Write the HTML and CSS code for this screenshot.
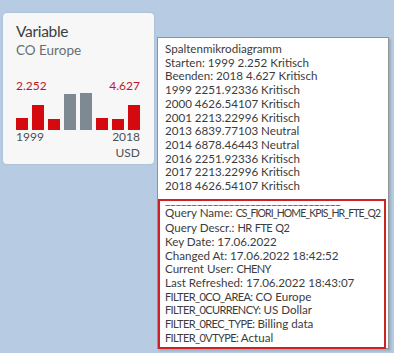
FILE: index.html
```html
<!DOCTYPE html>
<html lang="de">
<head>
    <meta charset="UTF-8">
    <meta name="viewport" content="width=device-width, initial-scale=1.0">
    <title>Variable - CO Europe</title>
    <link rel="stylesheet" href="styles.css">
</head>
<body>

<div class="tile">
    <div class="tileTitle">Variable</div>
    <div class="tileSubtitle">CO Europe</div>

    <div class="chartTop">
        <span>2.252</span>
        <span>4.627</span>
    </div>
    <div class="bars">
        <div class="bar critical" style="height:12px"></div>
        <div class="bar critical" style="height:25px"></div>
        <div class="bar critical" style="height:11px"></div>
        <div class="bar neutral" style="height:36px"></div>
        <div class="bar neutral" style="height:37px"></div>
        <div class="bar critical" style="height:12px"></div>
        <div class="bar critical" style="height:11px"></div>
        <div class="bar critical" style="height:25px"></div>
    </div>
    <div class="chartBottom">
        <span>1999</span>
        <span>2018</span>
    </div>
    <div class="unit">USD</div>
</div>

<div class="tooltip">
    <div class="line">Spaltenmikrodiagramm</div>
    <div class="line">Starten: 1999 2.252 Kritisch</div>
    <div class="line">Beenden: 2018 4.627 Kritisch</div>
    <div class="line">1999 2251.92336 Kritisch</div>
    <div class="line">2000 4626.54107 Kritisch</div>
    <div class="line">2001 2213.22996 Kritisch</div>
    <div class="line">2013 6839.77103 Neutral</div>
    <div class="line">2014 6878.46443 Neutral</div>
    <div class="line">2016 2251.92336 Kritisch</div>
    <div class="line">2017 2213.22996 Kritisch</div>
    <div class="line">2018 4626.54107 Kritisch</div>

    <div class="queryInfo">
        <div class="line">_________________________________</div>
        <div class="line">Query Name: <span class="id long">CS_FIORI_HOME_KPIS_HR_FTE_Q2</span></div>
        <div class="line">Query Descr.: <span class="id">HR FTE Q2</span></div>
        <div class="line">Key Date: 17.06.2022</div>
        <div class="line">Changed At: 17.06.2022 18:42:52</div>
        <div class="line">Current User: <span class="id">CHENY</span></div>
        <div class="line">Last Refreshed: 17.06.2022 18:43:07</div>
        <div class="line"><span class="id">FILTER_0CO_AREA:</span> CO Europe</div>
        <div class="line"><span class="id">FILTER_0CURRENCY:</span> US Dollar</div>
        <div class="line"><span class="id">FILTER_0REC_TYPE:</span> Billing data</div>
        <div class="line"><span class="id">FILTER_0VTYPE:</span> Actual</div>
    </div>
</div>

</body>
</html>
```

FILE: styles.css
```css
body {
    margin: 0;
    background-color: #b7cbe2;
    width: 394px;
    height: 353px;
    overflow: hidden;
    position: relative;
    font-family: "Lato", "Open Sans", sans-serif;
}

.tile {
    margin-left: 3px;
    margin-top: 13px;
    width: 151px;
    height: 151px;
    box-sizing: border-box;
    padding: 8px 14px 0 13px;
    background-color: #f7f7f7;
    border-radius: 4px;
    box-shadow: 0 0 2px rgba(0, 0, 0, 0.15);
}

.tileTitle {
    font-size: 15.5px;
    color: #3a3d40;
    line-height: 20px;
    letter-spacing: -0.3px;
}

.tileSubtitle {
    font-size: 13.5px;
    color: #6a6d70;
    line-height: 18px;
}

.chartTop {
    display: flex;
    justify-content: space-between;
    margin-top: 21px;
    font-size: 12px;
    line-height: 12px;
    color: #c0181b;
}

.bars {
    display: flex;
    align-items: flex-end;
    gap: 4px;
    height: 37px;
    margin-top: 1px;
}

.bar {
    width: 12px;
}

.critical {
    background-color: #d50a0e;
}

.neutral {
    background-color: #7e8a93;
}

.chartBottom {
    display: flex;
    justify-content: space-between;
    font-size: 12px;
    line-height: 14px;
    color: #4e5154;
}

.unit {
    text-align: right;
    font-size: 12px;
    line-height: 14px;
    margin-top: 2px;
    color: #4e5154;
}

.tooltip {
    position: absolute;
    left: 157px;
    top: 37px;
    width: 232px;
    height: 312px;
    box-sizing: border-box;
    padding: 4px 1px 0 7px;
    background-color: #ffffff;
    border: 1px solid #8f9497;
    box-shadow: 2px 2px 2px rgba(0, 0, 0, 0.15);
    font-family: "Lato", sans-serif;
    font-size: 11.6px;
    color: #3c3c3c;
}

.line {
    line-height: 13.7px;
    white-space: nowrap;
}

.id {
    font-size: 11px;
    letter-spacing: -0.6px;
    word-spacing: 1px;
}

.long {
    font-size: 10.5px;
    letter-spacing: -0.9px;
}

.queryInfo {
    position: relative;
}

/* red marker drawn round the query details */
.queryInfo::after {
    content: "";
    position: absolute;
    top: 6px;
    left: -7px;
    right: 1px;
    bottom: -5px;
    border: 2px solid #cc2226;
}
```
